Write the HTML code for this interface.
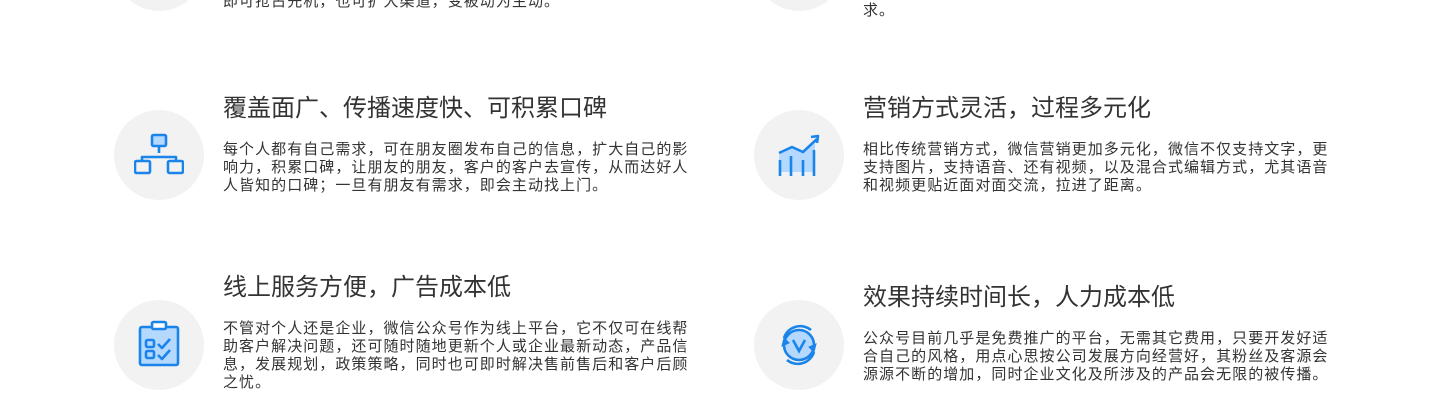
<!DOCTYPE html>
<html><head><meta charset="utf-8"><style>
body{margin:0;width:1452px;height:400px;overflow:hidden;background:#fff;position:relative;font-family:"Liberation Sans","Noto Sans CJK SC",sans-serif;color:#333}
.c{position:absolute;width:90px;height:90px;border-radius:50%;background:#f2f2f2}
.c svg{position:absolute;left:20px;top:20px}
.t{position:absolute;font-size:24px;color:#333;white-space:nowrap;line-height:30px}
.p{position:absolute;font-size:15px;letter-spacing:1.05px;line-height:18px;white-space:nowrap;color:#333}
</style></head><body>
<div class="c" style="left:114px;top:-79px"></div>
<div class="c" style="left:754px;top:-79px"></div>
<div class="p" style="left:223px;top:-7px">即可抢占先机，也可扩大渠道，变被动为主动。</div>
<div class="p" style="left:863px;top:2px">求。</div>

<div class="c" style="left:114px;top:110px"><svg width="50" height="50" viewBox="0 0 50 50" fill="none" stroke="#1a84ea" stroke-width="2.6" stroke-linejoin="round"><rect x="18" y="5" width="14" height="11" rx="1.5" fill="#b5d8ff"/><path d="M25 16v7M8 31v-4h34v4"/><rect x="1" y="31" width="15" height="12" rx="1.5"/><rect x="34" y="31" width="15" height="12" rx="1.5"/></svg></div>
<div class="t" style="left:223px;top:94px">覆盖面广、传播速度快、可积累口碑</div>
<div class="p" style="left:223px;top:141px">每个人都有自己需求，可在朋友圈发布自己的信息，扩大自己的影<br>响力，积累口碑，让朋友的朋友，客户的客户去宣传，从而达好人<br>人皆知的口碑；一旦有朋友有需求，即会主动找上门。</div>

<div class="c" style="left:754px;top:110px"><svg width="50" height="50" viewBox="0 0 50 50" fill="none" stroke="#1a84ea" stroke-width="2.6"><path d="M5 24l12-6 12 5 12-10v29H5z" fill="#b5d8ff" stroke="none"/><path d="M5 23l13-6 11 5 14-13"/><path d="M37 7l7-1-1 7" stroke-linejoin="round"/><path d="M6 30v16M17 26v20M29 30v16M40 20v26"/></svg></div>
<div class="t" style="left:863px;top:94px">营销方式灵活，过程多元化</div>
<div class="p" style="left:863px;top:141px">相比传统营销方式，微信营销更加多元化，微信不仅支持文字，更<br>支持图片，支持语音、还有视频，以及混合式编辑方式，尤其语音<br>和视频更贴近面对面交流，拉进了距离。</div>

<div class="c" style="left:114px;top:300px"><svg width="50" height="50" viewBox="0 0 50 50" fill="none" stroke="#1a84ea" stroke-width="2.6" stroke-linejoin="round"><rect x="6" y="7" width="38" height="38" rx="2" fill="#b5d8ff"/><rect x="18" y="2" width="14" height="7" rx="1.5" fill="#fff"/><rect x="12" y="20" width="8" height="7" rx="1.5"/><rect x="12" y="31" width="8" height="7" rx="1.5"/><path d="M24 24l4 4 8-9M24 35l4 4 8-9"/></svg></div>
<div class="t" style="left:223px;top:273px">线上服务方便，广告成本低</div>
<div class="p" style="left:223px;top:320px">不管对个人还是企业，微信公众号作为线上平台，它不仅可在线帮<br>助客户解决问题，还可随时随地更新个人或企业最新动态，产品信<br>息，发展规划，政策策略，同时也可即时解决售前售后和客户后顾<br>之忧。</div>

<div class="c" style="left:754px;top:300px"><svg width="50" height="50" viewBox="0 0 50 50" fill="none" stroke="#1a84ea" stroke-width="2.6"><circle cx="25" cy="25" r="15" fill="#b5d8ff"/><path d="M19 20l6 11 6-11"/><path d="M10 18A17 17 0 0 1 37 10"/><path d="M40 32A17 17 0 0 1 13 40"/><path d="M8 26l2-8 5 5z M42 24l-2 8-5-5z" fill="#1a84ea" stroke-width="1"/></svg></div>
<div class="t" style="left:863px;top:283px">效果持续时间长，人力成本低</div>
<div class="p" style="left:863px;top:330px">公众号目前几乎是免费推广的平台，无需其它费用，只要开发好适<br>合自己的风格，用点心思按公司发展方向经营好，其粉丝及客源会<br>源源不断的增加，同时企业文化及所涉及的产品会无限的被传播。</div>
</body></html>
